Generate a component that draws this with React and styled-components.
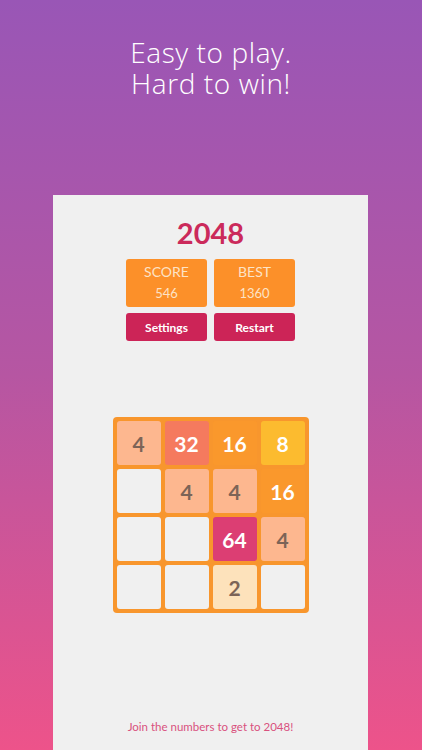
import styled, { createGlobalStyle } from 'styled-components';

const GlobalStyle = createGlobalStyle`
    html, body {
        margin: 0;
        padding: 0;
    }
`;

const board = [
    [4, 32, 16, 8],
    [0, 4, 4, 16],
    [0, 0, 64, 4],
    [0, 0, 2, 0],
];

const tileColors = {
    0: { bg: '#f0f0f0', fg: 'transparent' },
    2: { bg: '#fde2bb', fg: '#7c6457' },
    4: { bg: '#fdb78f', fg: '#7c6457' },
    8: { bg: '#fcbb2f', fg: '#ffffff' },
    16: { bg: '#fa982c', fg: '#ffffff' },
    32: { bg: '#f57a5e', fg: '#ffffff' },
    64: { bg: '#dc3e73', fg: '#ffffff' },
};

const App = () => {
    return (
        <>
            <GlobalStyle />
            <Page>
                <Heading>
                    <HeadingLine>Easy to play.</HeadingLine>
                    <HeadingLine>Hard to win!</HeadingLine>
                </Heading>
                <Panel>
                    <Title>2048</Title>
                    <Row>
                        <ScoreBox>
                            <ScoreLabel>SCORE</ScoreLabel>
                            <ScoreValue>546</ScoreValue>
                        </ScoreBox>
                        <ScoreBox>
                            <ScoreLabel>BEST</ScoreLabel>
                            <ScoreValue>1360</ScoreValue>
                        </ScoreBox>
                    </Row>
                    <ButtonRow>
                        <Button>Settings</Button>
                        <Button>Restart</Button>
                    </ButtonRow>
                    <Grid>
                        {board.flat().map((value, index) => (
                            <Tile key={index} value={value}>
                                {value > 0 && value}
                            </Tile>
                        ))}
                    </Grid>
                    <Footer>Join the numbers to get to 2048!</Footer>
                </Panel>
            </Page>
        </>
    );
};

const Page = styled.div`
    height: 750px;
    display: flex;
    flex-direction: column;
    background: linear-gradient(180deg, #9956b6 0%, #b656a2 50%, #ed538a 100%);
    overflow: hidden;
`;

const Heading = styled.h1`
    margin: 0;
    padding-top: 37px;
    height: 195px;
    flex-shrink: 0;
    box-sizing: border-box;
    text-align: center;
    color: #ffffff;
    font-family: 'Open Sans', 'Lato', sans-serif;
    font-weight: 300;
    font-size: 28px;
    letter-spacing: 0.6px;
`;

const HeadingLine = styled.div`
    height: 31px;
    line-height: 31px;
`;

const Panel = styled.div`
    flex: 1;
    margin: 0 54px 0 53px;
    background-color: #f0f0f0;
    display: flex;
    flex-direction: column;
    align-items: center;
    font-family: 'Lato', sans-serif;
`;

const Title = styled.div`
    margin-top: 20px;
    height: 36px;
    line-height: 36px;
    font-size: 29px;
    font-weight: 700;
    color: #cb2a5b;
`;

const Row = styled.div`
    display: flex;
    gap: 7px;
    margin-top: 8px;
`;

const ButtonRow = styled(Row)`
    margin-top: 6px;
`;

const ScoreBox = styled.div`
    width: 81px;
    height: 48px;
    box-sizing: border-box;
    padding-top: 4px;
    border-radius: 3px;
    background-color: #fc9029;
    display: flex;
    flex-direction: column;
    align-items: center;
`;

const ScoreLabel = styled.div`
    font-size: 14px;
    line-height: 18px;
    color: #fde3c6;
`;

const ScoreValue = styled.div`
    margin-top: 4px;
    font-size: 13px;
    line-height: 16px;
    color: #fde3c6;
`;

const Button = styled.div`
    width: 81px;
    height: 28px;
    border-radius: 3px;
    background-color: #cc2457;
    color: #ffffff;
    font-size: 12px;
    font-weight: 700;
    display: flex;
    align-items: center;
    justify-content: center;
`;

const Grid = styled.div`
    margin-top: 76px;
    padding: 4px;
    display: grid;
    grid-template-columns: repeat(4, 44px);
    grid-auto-rows: 44px;
    gap: 4px;
    background-color: #f8962d;
    border-radius: 4px;
`;

const Tile = styled.div`
    border-radius: 3px;
    background-color: ${(props) => tileColors[props.value].bg};
    color: ${(props) => tileColors[props.value].fg};
    font-size: 21px;
    font-weight: 700;
    display: flex;
    align-items: center;
    justify-content: center;
`;

const Footer = styled.div`
    margin-top: auto;
    margin-bottom: 17px;
    font-size: 11.5px;
    color: #d9517e;
`;

export default App;
